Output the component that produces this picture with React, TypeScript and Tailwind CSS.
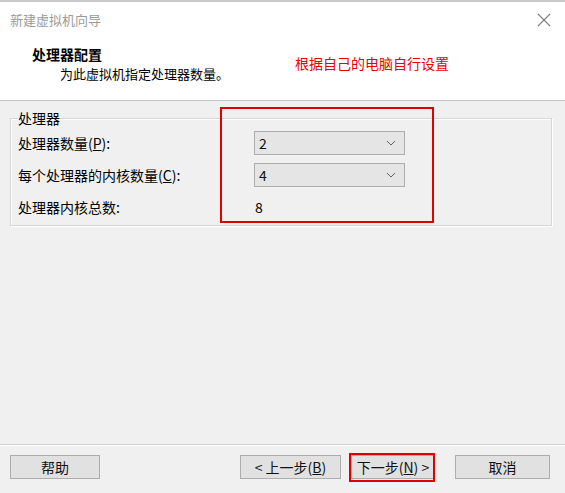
import React from "react";

const font = { fontFamily: '"Noto Sans CJK SC", "Noto Sans", sans-serif' };

function Chevron() {
  return (
    <svg width="10" height="6" viewBox="0 0 10 6" className="shrink-0">
      <path d="M1 1 L5 5 L9 1" fill="none" stroke="#606060" strokeWidth="1" />
    </svg>
  );
}

function Select({ value }: { value: string }) {
  return (
    <div className="w-[151px] h-[24px] bg-[#e5e5e5] border border-[#adadad] flex items-center justify-between pl-[4px] pr-[8px] text-[14px] text-[#111]">
      <span>{value}</span>
      <Chevron />
    </div>
  );
}

function Btn({ children, w }: { children: React.ReactNode; w: string }) {
  return (
    <div className={`${w} h-[24px] bg-[#e1e1e1] border border-[#adadad] flex items-center justify-center text-[14px] text-[#111]`}>
      {children}
    </div>
  );
}

export default function App() {
  return (
    <div className="relative w-[565px] h-[493px] flex flex-col bg-[#f0f0f0] overflow-hidden" style={font}>
      {/* header */}
      <div className="h-[101px] bg-white border-t-2 border-[#c9c9c9] border-b border-b-[#c4c4c4] flex flex-col">
        <div className="flex items-center justify-between pl-[10px] pr-[14px] h-[35px]">
          <span className="text-[13px] text-[#9a9a9a]">新建虚拟机向导</span>
          <svg width="14" height="14" viewBox="0 0 14 14">
            <path d="M1 1 L13 13 M13 1 L1 13" stroke="#808080" strokeWidth="1.2" />
          </svg>
        </div>
        <div className="flex pl-[32px] pt-[7px]">
          <div className="flex flex-col">
            <span className="text-[14px] font-bold text-black leading-[20px]">处理器配置</span>
            <span className="text-[13px] text-black pl-[28px] leading-[20px]">为此虚拟机指定处理器数量。</span>
          </div>
          <span className="ml-[66px] mt-[9px] text-[14px] text-[#e60000] leading-[20px]">根据自己的电脑自行设置</span>
        </div>
      </div>

      {/* body */}
      <div className="flex-1 pt-[8px] px-[10px] pr-[13px]">
        <fieldset className="border border-[#d5d5d5] shadow-[inset_1px_1px_0_#ffffff,1px_1px_0_#ffffff] pl-[7px] pb-[2px] pt-0">
          <legend className="text-[14px] text-black leading-[18px] px-0">处理器</legend>
          <div className="flex flex-col text-[14px] text-black">
            <div className="flex items-center h-[32px]">
              <span className="w-[236px]">处理器数量(<span className="underline">P</span>):</span>
              <Select value="2" />
            </div>
            <div className="flex items-center h-[32px]">
              <span className="w-[236px]">每个处理器的内核数量(<span className="underline">C</span>):</span>
              <Select value="4" />
            </div>
            <div className="flex items-center h-[32px]">
              <span className="w-[236px]">处理器内核总数:</span>
              <span className="pl-[1px]">8</span>
            </div>
          </div>
        </fieldset>
      </div>

      {/* footer */}
      <div className="h-[49px] border-t border-[#d0d0d0] shadow-[inset_0_1px_0_#ffffff] flex items-start pt-[10px] px-[10px]">
        <Btn w="w-[90px]">帮助</Btn>
        <div className="flex-1" />
        <Btn w="w-[101px]">&lt; 上一步(<span className="underline">B</span>)</Btn>
        <div className="w-[10px]" />
        <Btn w="w-[84px]">下一步(<span className="underline">N</span>) &gt;</Btn>
        <div className="w-[20px]" />
        <Btn w="w-[95px]">取消</Btn>
        <div className="w-[5px]" />
      </div>

      {/* red annotations */}
      <div className="absolute left-[220px] top-[107px] w-[214px] h-[116px] border-2 border-[#e00000]" />
      <div className="absolute left-[349px] top-[453px] w-[86px] h-[29px] border-2 border-[#e00000]" />
    </div>
  );
}
